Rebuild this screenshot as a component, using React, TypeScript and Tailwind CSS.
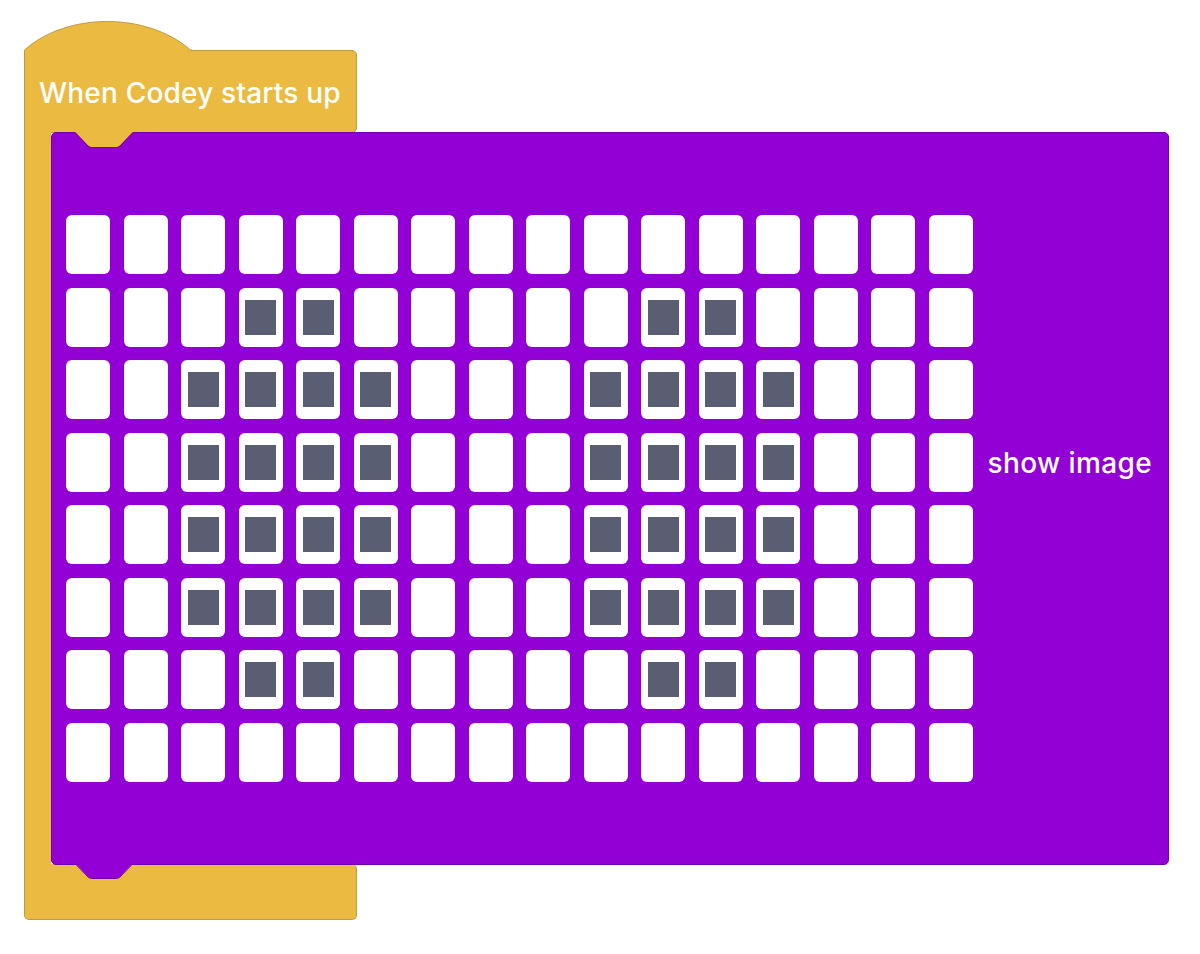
const YELLOW = 'bg-[#ebbb41]';

const lit: Record<number, number[]> = {
  1: [3, 4, 10, 11],
  2: [2, 3, 4, 5, 9, 10, 11, 12],
  3: [2, 3, 4, 5, 9, 10, 11, 12],
  4: [2, 3, 4, 5, 9, 10, 11, 12],
  5: [2, 3, 4, 5, 9, 10, 11, 12],
  6: [3, 4, 10, 11],
};

function Cell({ on }: { on: boolean }) {
  return (
    <div className="flex h-[59px] w-[44px] items-center justify-center rounded-[6px] bg-white">
      {on && <div className="h-[35px] w-[31px] bg-[#5a5e72]" />}
    </div>
  );
}

function LedGrid() {
  const rows = Array.from({ length: 8 }, (_, r) => r);
  const cols = Array.from({ length: 16 }, (_, c) => c);
  return (
    <div className="grid grid-cols-[repeat(16,44px)] grid-rows-[repeat(8,59px)] gap-[13.5px]">
      {rows.map((r) =>
        cols.map((c) => <Cell key={`${r}-${c}`} on={(lit[r] ?? []).includes(c)} />),
      )}
    </div>
  );
}

export default function App() {
  return (
    <div
      className="min-h-[954px] w-[1200px] bg-white pl-[24px] pt-[21px]"
      style={{ fontFamily: 'Inter, "Noto Sans", Arial, sans-serif' }}
    >
      {/* hat */}
      <svg width="168" height="31" className="relative z-10 -mb-[2px] block" viewBox="0 0 168 31">
        <path d="M0.5 31 L0.5 29 C 43 -9 123 -9 166.5 29 L166.5 31 Z" fill="#ebbb41" />
        <path d="M0.5 31 L0.5 29 C 43 -9 123 -9 166.5 29 L168 29" fill="none" stroke="#bf9a45" strokeWidth="1" />
      </svg>

      <div
        className={`flex h-[83px] w-[333px] items-center rounded-r-[5px] border border-[#bf9a45] ${YELLOW} pl-[14px] pt-[2px] text-[28px] font-medium tracking-[0.2px] text-white`}
      >
        When Codey starts up
      </div>

      <div className="-mt-px flex">
        <div className={`w-[27px] border-l border-[#bf9a45] ${YELLOW}`} />
        <div className="relative flex h-[733px] w-[1118px] items-start rounded-[5px] border border-[#7200aa] bg-[#9200d6] pl-[14px] pt-[82px]">
          {/* top notch: yellow tab from the C-block */}
          <svg width="58" height="16" className="absolute left-[23px] -top-px" viewBox="0 0 58 16">
            <path d="M0 0 L13 13.5 Q14.5 15 16.5 15 L41.5 15 Q43.5 15 45 13.5 L58 0 Z" fill="#ebbb41" />
            <path d="M0 0.5 L13 14 Q14.5 15.5 16.5 15.5 L41.5 15.5 Q43.5 15.5 45 14 L58 0.5" fill="none" stroke="#7200aa" strokeWidth="1" />
          </svg>

          <LedGrid />
          <div className="ml-[15px] mt-[233px] text-[28px] font-medium leading-[30px] tracking-[0.4px] text-white">show image</div>

          {/* bottom tab: purple tab into the C-block */}
          <svg width="58" height="17" className="absolute left-[23px] -bottom-[16px] z-10" viewBox="0 0 58 17">
            <path d="M0 0 L13 13.5 Q14.5 15 16.5 15 L41.5 15 Q43.5 15 45 13.5 L58 0 Z" fill="#9200d6" />
            <path d="M0 0.5 L13 14 Q14.5 15.5 16.5 15.5 L41.5 15.5 Q43.5 15.5 45 14 L58 0.5" fill="none" stroke="#7200aa" strokeWidth="1" />
          </svg>
        </div>
      </div>

      <div
        className={`-mt-px h-[56px] w-[333px] rounded-b-[5px] rounded-tr-[5px] border border-t-0 border-[#bf9a45] ${YELLOW}`}
      />
    </div>
  );
}
